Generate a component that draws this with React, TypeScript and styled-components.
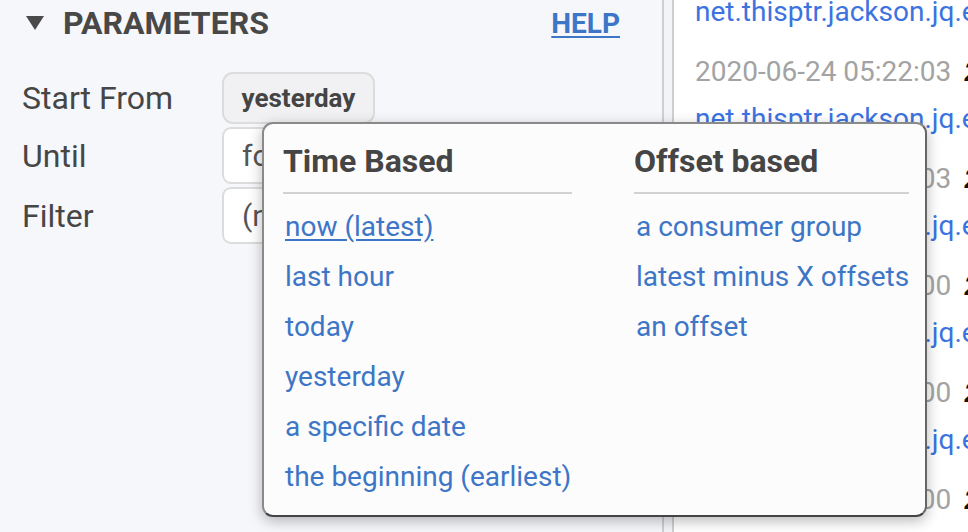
import React from "react";
import styled, { createGlobalStyle } from "styled-components";

const Global = createGlobalStyle`
  html, body { margin: 0; padding: 0; width: 968px; height: 532px; overflow: hidden; }
  body { font-family: Roboto, "Liberation Sans", sans-serif; background: #fff; }
  * { box-sizing: border-box; }
`;

const Screen = styled.div`
  position: relative;
  width: 968px;
  height: 532px;
  display: flex;
  overflow: hidden;
`;

const LeftPanel = styled.section`
  width: 662px;
  flex: none;
  background: #f6f7fb;
  padding: 4px 42px 0 22px;
`;

const Header = styled.div`
  display: flex;
  align-items: center;
  height: 38px;
`;

const Caret = styled.span`
  width: 0;
  height: 0;
  margin-left: 4px;
  border-left: 9px solid transparent;
  border-right: 9px solid transparent;
  border-top: 14px solid #4a4a4a;
  margin-right: 19px;
`;

const Title = styled.h2`
  margin: 0;
  font-size: 32px;
  font-weight: 700;
  color: #484848;
  flex: 1;
`;

const HelpLink = styled.a`
  font-size: 28px;
  font-weight: 700;
  color: #3d76c6;
  text-decoration: underline;
  text-underline-offset: 3px;
`;

const Form = styled.div`
  margin-top: 30px;
  display: grid;
  grid-template-columns: 200px 1fr;
  row-gap: 3px;
  align-items: center;
`;

const Label = styled.div`
  font-size: 32px;
  color: #464646;
`;

const ChipButton = styled.button`
  justify-self: start;
  width: 153px;
  height: 52px;
  padding: 0;
  border: 2px solid #dcdcdc;
  border-radius: 11px;
  background: #f1f1f3;
  font-family: Roboto, "Liberation Sans", sans-serif;
  font-size: 26px;
  font-weight: 700;
  color: #444;
`;

const Field = styled.div`
  height: 57px;
  border: 2px solid #dcdcdc;
  border-radius: 9px;
  background: #fff;
  font-size: 30px;
  color: #555;
  padding: 0 0 0 18px;
  display: flex;
  align-items: center;
`;

const Divider = styled.div`
  width: 12px;
  flex: none;
  border-left: 2px solid #cfcfcf;
  border-right: 2px solid #cfcfcf;
  background: #f3f4f7;
`;

const RightPanel = styled.section`
  flex: 1;
  background: #fff;
  padding-left: 21px;
  overflow: hidden;
  white-space: nowrap;
`;

const Records = styled.div`
  margin-top: -8px;
  display: flex;
  flex-direction: column;
  gap: 20px;
`;

const Record = styled.div`
  display: flex;
  flex-direction: column;
  gap: 7px;
`;

const Line = styled.div`
  height: 40px;
  line-height: 40px;
  font-size: 28px;
`;

const Klass = styled(Line)`
  color: #3c73e0;
`;

const Stamp = styled.span`
  color: #a3a3a3;
`;

const Key = styled.b`
  color: #111;
  margin-left: 13px;
  font-style: italic;
`;

const Popover = styled.div`
  position: absolute;
  left: 262px;
  top: 122px;
  width: 665px;
  height: 395px;
  background: #fcfcfc;
  border: 2px solid #8a8a8a;
  border-bottom-color: #444;
  border-right-color: #666;
  border-radius: 11px;
  box-shadow: 0 4px 14px rgba(0, 0, 0, 0.28);
  display: grid;
  grid-template-columns: 289px 275px;
  column-gap: 62px;
  padding: 20px 0 0 19px;
  align-content: start;
`;

const Column = styled.div`
  display: flex;
  flex-direction: column;
`;

const ColumnTitle = styled.h3`
  margin: 0;
  height: 50px;
  line-height: 34px;
  font-size: 32px;
  font-weight: 700;
  color: #454545;
  border-bottom: 2px solid #d2d2d2;
  white-space: nowrap;
`;

const Options = styled.div`
  padding-top: 8px;
  display: flex;
  flex-direction: column;
`;

const Option = styled.a<{ $active?: boolean }>`
  display: block;
  height: 50px;
  line-height: 50px;
  padding-left: 2px;
  font-size: 28px;
  white-space: nowrap;
  color: #3d76c6;
  text-decoration: ${(p) => (p.$active ? "underline" : "none")};
  text-underline-offset: 3px;
`;

const timeOptions = [
  "now (latest)",
  "last hour",
  "today",
  "yesterday",
  "a specific date",
  "the beginning (earliest)",
];
const offsetOptions = ["a consumer group", "latest minus X offsets", "an offset"];
const stamps = [
  "2020-06-24 05:22:03",
  "2020-06-24 05:22:03",
  "2020-06-24 05:22:00",
  "2020-06-24 05:22:00",
  "2020-06-24 05:22:00",
];
const klass = "net.thisptr.jackson.jq.exception.JsonQueryException";

export default function App() {
  return (
    <>
      <Global />
      <Screen>
        <LeftPanel>
          <Header>
            <Caret />
            <Title>PARAMETERS</Title>
            <HelpLink>HELP</HelpLink>
          </Header>
          <Form>
            <Label>Start From</Label>
            <ChipButton>yesterday</ChipButton>
            <Label>Until</Label>
            <Field>forever</Field>
            <Label>Filter</Label>
            <Field>(none)</Field>
          </Form>
        </LeftPanel>
        <Divider />
        <RightPanel>
          <Records>
            <Klass>{klass}</Klass>
            {stamps.map((s, i) => (
              <Record key={i}>
                <Line>
                  <Stamp>{s}</Stamp>
                  <Key>2</Key>
                </Line>
                <Klass>{klass}</Klass>
              </Record>
            ))}
          </Records>
        </RightPanel>
        <Popover>
          <Column>
            <ColumnTitle>Time Based</ColumnTitle>
            <Options>
              {timeOptions.map((o, i) => (
                <Option key={o} $active={i === 0}>
                  {o}
                </Option>
              ))}
            </Options>
          </Column>
          <Column>
            <ColumnTitle>Offset based</ColumnTitle>
            <Options>
              {offsetOptions.map((o) => (
                <Option key={o}>{o}</Option>
              ))}
            </Options>
          </Column>
        </Popover>
      </Screen>
    </>
  );
}
